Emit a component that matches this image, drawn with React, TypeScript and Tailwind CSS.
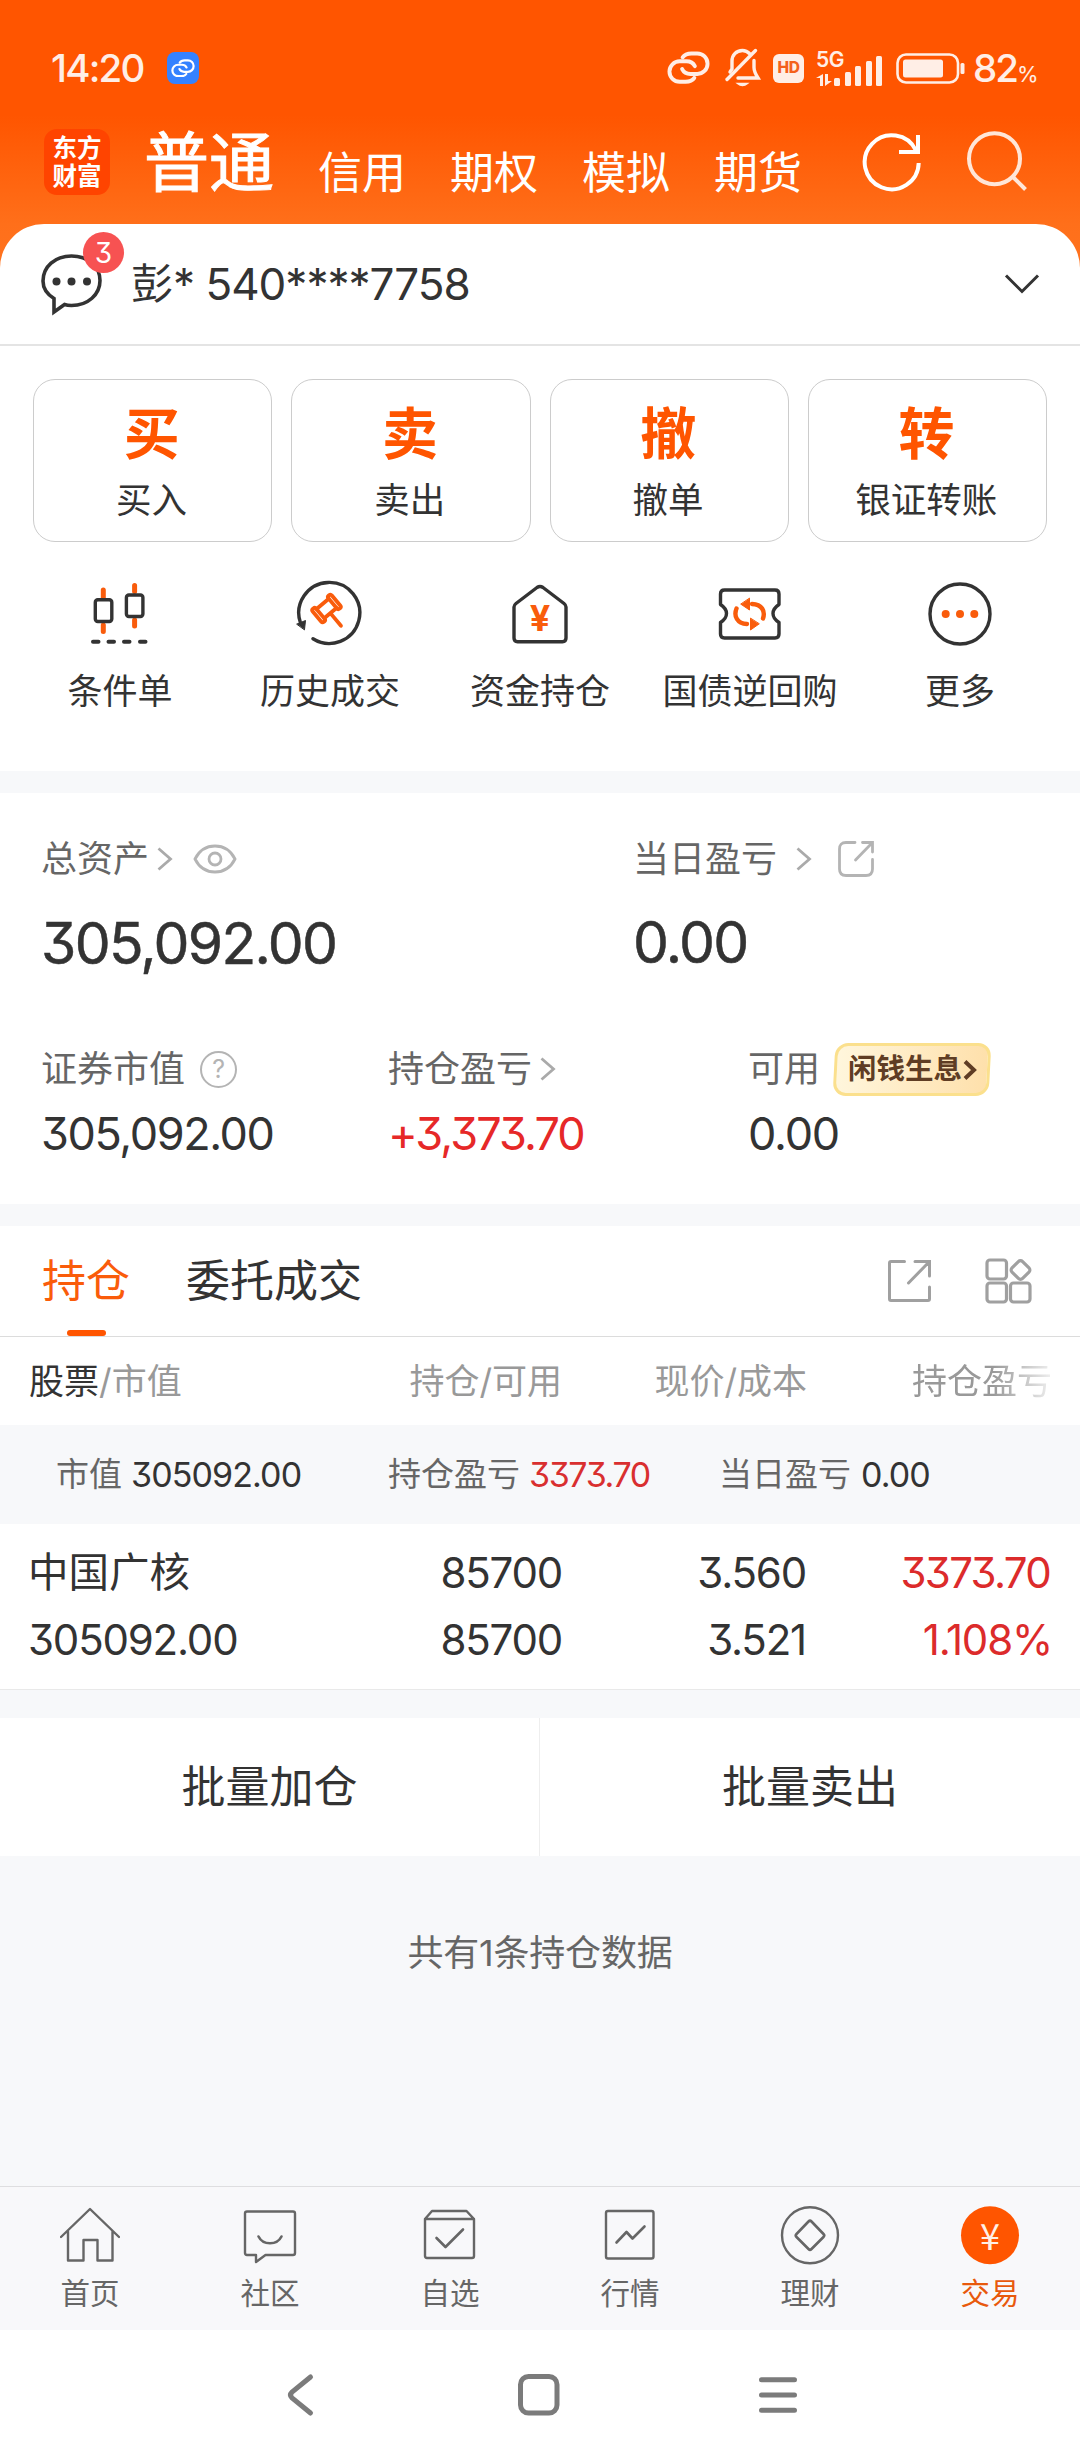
import type { ReactNode } from "react";

const QUICK_ACTIONS = [
  { mark: "买", label: "买入" },
  { mark: "卖", label: "卖出" },
  { mark: "撤", label: "撤单" },
  { mark: "转", label: "银证转账" },
];

const ACCOUNT_TABS = ["信用", "期权", "模拟", "期货"];

const SIGNAL_BARS = [8, 14, 20, 25, 30];

function LinkIcon({ className }: { className?: string }) {
  return (
    <svg viewBox="0 0 44 34" className={className} fill="none" stroke="currentColor" strokeWidth="4" strokeLinecap="round">
      <path d="M16 6.500C18 3.500 21 2.500 25 2.500h6a10.500 10.500 0 0 1 0 21h-7c-4 0-7-2-8.500-5" />
      <path d="M28 27.500c-2 3-5 4-9 4h-6a10.500 10.500 0 0 1 0-21h7c4 0 7 2 8.500 5" />
    </svg>
  );
}

function ChevronRight() {
  return (
    <svg width="16" height="24" viewBox="0 0 16 24" fill="none" stroke="#aaaaaa" strokeWidth="2.800">
      <path d="M1.500 1.500 13.500 12 1.500 22.500" />
    </svg>
  );
}

function StatusBar() {
  return (
    <div className="flex h-[112px] items-center pt-[24px] pl-[51px] text-[#ffeee6]">
      <span className="w-[116px] text-[38.500px] leading-[44px] font-medium tracking-[-1.800px]">14:20</span>
      <span className="flex size-8 items-center justify-center rounded-[8px] bg-[#3482ff] text-white">
        <LinkIcon className="w-[24px]" />
      </span>
      <LinkIcon className="ml-[468px] w-[43px]" />
      <svg className="ml-[14px]" width="38" height="40" viewBox="0 0 38 40" fill="none" stroke="currentColor" strokeWidth="3.400" strokeLinecap="round">
        <path d="M26 6C23.500 3.500 21 2.500 18.500 2.500 12 2.500 8 7.500 8 13v8l-2 3" />
        <path d="M30 12.500v7c0 4 1.500 6.500 4 10.500H14" />
        <path d="M31.500 2.500 3 31.500" />
        <path d="M13.500 35.500c3 2.500 7 2.500 10 0z" fill="currentColor" strokeWidth="1.500" />
      </svg>
      <span className="ml-[11px] flex h-[29px] w-[31px] items-center justify-center rounded-[6px] bg-[#ffeee6] text-[15.500px] font-extrabold tracking-[-0.500px] text-[#f4601c]">
        HD
      </span>
      <div className="ml-[12px] flex h-[35px] w-[68px] items-end">
        <div className="flex h-full w-[18px] flex-col justify-between">
          <span className="text-[21px] leading-[18px] font-semibold tracking-[-0.500px]">5G</span>
          <svg width="16" height="12" viewBox="0 0 16 12" fill="currentColor">
            <path d="M4 12V4H0L7 0v12zM9 0v12l7-5h-4V0z" />
          </svg>
        </div>
        <div className="flex items-end gap-[4.500px]">
          {SIGNAL_BARS.map((height) => (
            <span key={height} className="w-[6px] rounded-[1.500px] bg-[#ffeee6]" style={{ height }} />
          ))}
        </div>
      </div>
      <svg className="ml-[12px]" width="70" height="31" viewBox="0 0 70 31">
        <rect x="1.500" y="1.500" width="60.500" height="28" rx="8.500" fill="none" stroke="currentColor" strokeWidth="2.600" />
        <rect x="7" y="6.500" width="40" height="18" rx="2.500" fill="currentColor" />
        <rect x="64.500" y="10" width="4" height="11" rx="1.500" fill="currentColor" />
      </svg>
      <span className="ml-[7px] text-[38.500px] leading-[44px] font-medium tracking-[-2px]">82</span>
      <span className="mt-[12px] text-[22px] leading-none">%</span>
    </div>
  );
}

function Header() {
  return (
    <div className="flex h-[100px] items-center pl-[44px] text-white">
      <div className="flex h-[66px] w-[66px] flex-col items-center justify-center rounded-[13px] bg-[#ff4400] text-[24.500px] leading-[28px] font-bold">
        <span>东方</span>
        <span>财富</span>
      </div>
      <div className="ml-[34px] flex items-end leading-none">
        <span className="text-[65px] [-webkit-text-stroke:1px_#fff]">普通</span>
        {ACCOUNT_TABS.map((tab) => (
          <span key={tab} className="ml-[44px] text-[44px]">
            {tab}
          </span>
        ))}
      </div>
      <svg className="ml-[58px]" width="64" height="64" viewBox="0 0 64 64" fill="none" stroke="currentColor" strokeWidth="4">
        <path d="M58.700 33A27 27 0 1 1 56 20.500" />
        <path d="M58 5v17H39" />
      </svg>
      <svg className="ml-[38px]" width="68" height="64" viewBox="0 0 68 64" fill="none" stroke="#ffe6d8" strokeWidth="4">
        <circle cx="32.500" cy="28.700" r="25.500" />
        <path d="M50 46 63.500 59.500" />
      </svg>
    </div>
  );
}

function AccountRow() {
  return (
    <div className="flex h-[122px] items-center border-b-2 border-[#e4e4e4] pr-[40px] pl-[40px] text-[#333333]">
      <div className="relative">
        <svg width="64" height="64" viewBox="0 0 64 64" fill="none" stroke="#333333" strokeWidth="3.600">
          <path d="M14 46.500C6 41.500 3 35 3 29 3 14.500 15 4 31.500 4S60 14.500 60 28.500 48 53.500 31.500 53.500c-2.500 0-5-.3-7-1L14 60z" />
          <g fill="#333333" stroke="none">
            <circle cx="16.500" cy="29.500" r="4" />
            <circle cx="31.500" cy="29.500" r="4" />
            <circle cx="47" cy="29.500" r="4" />
          </g>
        </svg>
        <span className="absolute -top-[20px] left-[43px] flex size-[41px] items-center justify-center rounded-full bg-[#f75252] text-[28px] text-white">
          3
        </span>
      </div>
      <div className="ml-[27px] flex flex-1 items-center leading-none">
        <span className="text-[42px]">彭</span>
        <span className="text-[44px] tracking-[-1px]">* 540****7758</span>
      </div>
      <svg width="36" height="20" viewBox="0 0 36 20" fill="none" stroke="#333333" strokeWidth="3">
        <path d="M2 1.500 18 17.500 34 1.500" />
      </svg>
    </div>
  );
}

function QuickActions() {
  return (
    <div className="grid grid-cols-4 gap-x-[19px] px-[33px] pt-[33px]">
      {QUICK_ACTIONS.map((action) => (
        <div key={action.label} className="flex h-[163px] flex-col items-center rounded-[22px] border border-[#cccccc] pt-[24px] pr-[2px]">
          <span className="text-[56px] leading-[60px] font-bold text-[#ff5500]">{action.mark}</span>
          <span className="mt-[17px] text-[35.500px] leading-[40px] text-[#333333]">{action.label}</span>
        </div>
      ))}
    </div>
  );
}

function Shortcut({ label, children }: { label: string; children: ReactNode }) {
  return (
    <div className="flex flex-col items-center">
      <svg width="70" height="70" viewBox="0 0 70 70" fill="none" stroke="#333333" strokeWidth="3.400" strokeLinecap="round" strokeLinejoin="round">
        {children}
      </svg>
      <span className="mt-[23px] text-[35px] leading-[40px] whitespace-nowrap text-[#333333]">{label}</span>
    </div>
  );
}

function Shortcuts() {
  return (
    <div className="grid h-[229px] grid-cols-5 px-[15px] pt-[36px]">
      <Shortcut label="条件单">
        <path stroke="#f95c0c" strokeWidth="5" d="M18.300 12v8M18.300 47v6.500M49.600 7.500v6M49.600 42v6" />
        <rect x="10.300" y="21.700" width="16.500" height="21.800" rx="2.500" />
        <rect x="41.400" y="17" width="16.500" height="21.500" rx="2.500" />
        <path strokeWidth="4" d="M8 63.700h5.500M23.500 63.700H29M39 63.700h5.500M55 63.700h5.500" />
      </Shortcut>
      <Shortcut label="历史成交">
        <path d="M18 60.700A30.500 30.500 0 1 0 5.500 45" />
        <path fill="#333333" strokeWidth="1" d="M2 46 10.500 42.500 9.500 51.500z" />
        <g transform="translate(31.500 30.500) rotate(-40)" stroke="#f95c0c" strokeWidth="3.800">
          <rect x="-12.500" y="-8.500" width="4.500" height="17" rx="2" />
          <rect x="8" y="-8.500" width="4.500" height="17" rx="2" />
          <path d="M-8-6H8M-8 6H8M0 7v15.500" />
        </g>
      </Shortcut>
      <Shortcut label="资金持仓">
        <path d="M9 60V29q0-2 2-3.500L32 9.500q3-2 6 0l21 16q2 1.500 2 3.500v31q0 3.700-3.500 3.700h-45Q9 63.700 9 60z" />
        <text x="35" y="52.500" textAnchor="middle" fill="#f95c0c" stroke="none" fontSize="36" fontWeight="700">
          ¥
        </text>
      </Shortcut>
      <Shortcut label="国债逆回购">
        <path d="M9.500 12h50.500q4 0 4 4v10.500q-6 4-6 9t6 9V56q0 4-4 4H9.500q-4 0-4-4V44.500q6-4 6-9t-6-9V16q0-4 4-4z" />
        <g stroke="#f95c0c" strokeWidth="4.400">
          <path d="M21.500 30.500C18.500 38 22 45.500 32 46M48 40.500C50.500 33 47 26.500 37 26" />
          <path fill="#f95c0c" strokeWidth="1" d="M35.500 40.500v11.500l8.500-6zM34.500 20.500V32L26 26.300z" />
        </g>
      </Shortcut>
      <Shortcut label="更多">
        <circle cx="35" cy="36" r="30" />
        <g fill="#f95c0c" stroke="none">
          <circle cx="20.700" cy="36" r="4" />
          <circle cx="35" cy="36" r="4" />
          <circle cx="49.300" cy="36" r="4" />
        </g>
      </Shortcut>
    </div>
  );
}

function Assets() {
  return (
    <section className="h-[411px] bg-white pt-[44px] pl-[41px] text-[36px] text-[#666666]">
      <div className="flex">
        <div className="w-[592px]">
          <div className="flex h-[44px] items-center">
            <span>总资产</span>
            <span className="ml-[8px]">
              <ChevronRight />
            </span>
            <svg className="ml-[20px]" width="44" height="30" viewBox="0 0 44 30" fill="none" stroke="#b4b4b4" strokeWidth="2.800">
              <path d="M2 15C6 7 13 2 22 2s16 5 20 13c-4 8-11 13-20 13S6 23 2 15z" />
              <circle cx="22" cy="15" r="6" />
            </svg>
          </div>
          <div className="mt-[33px] text-[57px] leading-[60px] tracking-[-1.700px] text-[#333333] [-webkit-text-stroke:0.500px_#333]">
            305,092.00
          </div>
        </div>
        <div>
          <div className="flex h-[44px] items-center">
            <span>当日盈亏</span>
            <span className="ml-[19px]">
              <ChevronRight />
            </span>
            <svg className="ml-[25px]" width="38" height="38" viewBox="0 0 38 38" fill="none" stroke="#b4b4b4" strokeWidth="2.800" strokeLinecap="round">
              <path d="M18 2.500H9Q2.500 2.500 2.500 9v20q0 6.500 6.500 6.500h20q6.500 0 6.500-6.500V19.500" />
              <path d="M25.500 2.500h10V12M34.500 3.500 18.500 20" />
            </svg>
          </div>
          <div className="mt-[32px] text-[57px] leading-[60px] tracking-[-1.700px] text-[#333333] [-webkit-text-stroke:0.500px_#333]">
            0.00
          </div>
        </div>
      </div>

      <div className="mt-[69px] flex">
        <div className="w-[347px]">
          <div className="flex h-[52px] items-center">
            <span>证券市值</span>
            <span className="ml-[15px] flex size-[37px] items-center justify-center rounded-full border-[2.500px] border-[#b4b4b4] text-[25px] leading-none text-[#b4b4b4]">
              ?
            </span>
          </div>
          <div className="mt-[17px] text-[45px] leading-[44px] tracking-[-1.400px] text-[#333333]">305,092.00</div>
        </div>
        <div className="w-[360px]">
          <div className="flex h-[52px] items-center">
            <span>持仓盈亏</span>
            <span className="ml-[8px]">
              <ChevronRight />
            </span>
          </div>
          <div className="mt-[17px] text-[45px] leading-[44px] tracking-[-1.900px] text-[#e62828]">+3,373.70</div>
        </div>
        <div>
          <div className="flex h-[52px] items-center">
            <span>可用</span>
            <div className="ml-[14px] h-[53px] w-[156px] -skew-x-3 rounded-[13px] border-[3px] border-[#fbe08d] bg-linear-to-r from-[#fff6dc] to-[#fee0ab]">
              <div className="flex h-full skew-x-3 items-center pl-[11px] text-[28.500px] font-bold text-[#5f3d24]">
                <span>闲钱生息</span>
                <svg className="ml-[1px]" width="14" height="20" viewBox="0 0 14 20" fill="none" stroke="#5f3d24" strokeWidth="4">
                  <path d="M2 1.500 11 10 2 18.500" />
                </svg>
              </div>
            </div>
          </div>
          <div className="mt-[17px] text-[45px] leading-[44px] tracking-[-1.200px] text-[#333333]">0.00</div>
        </div>
      </div>
    </section>
  );
}

function PositionTabs() {
  return (
    <div className="flex h-[111px] items-center border-b border-[#dcdcdc] pr-[47px] pl-[42px] text-[44px]">
      <div className="relative flex h-full items-center text-[#fa5c0a]">
        持仓
        <span className="absolute bottom-0 left-[25px] h-[6px] w-[39px] rounded-[3px] bg-[#ff5500]" />
      </div>
      <span className="ml-[56px] flex-1 text-[#333333]">委托成交</span>
      <svg width="46" height="46" viewBox="0 0 46 46" fill="none" stroke="#a0a0a0" strokeWidth="3" strokeLinecap="round">
        <path d="M18.500 3.500H5q-1.500 0-1.500 1.500v36q0 1.500 1.500 1.500h37q1.500 0 1.500-1.500V29" />
        <path d="M29 3.500h14.500V18M42.500 4.500 22.500 25" />
      </svg>
      <svg className="ml-[53px]" width="48" height="46" viewBox="0 0 48 46" fill="none" stroke="#a0a0a0" strokeWidth="3.200">
        <rect x="2" y="2" width="19.500" height="19" rx="3" />
        <rect x="2" y="25" width="19.500" height="19" rx="3" />
        <rect x="25.500" y="25" width="19.500" height="19" rx="3" />
        <rect x="28" y="4.500" width="15" height="15" rx="3" transform="rotate(45 35.500 12)" />
      </svg>
    </div>
  );
}

function Positions() {
  return (
    <section className="bg-white">
      <PositionTabs />
      <div className="flex h-[88px] items-center pl-[29px] text-[35px] text-[#999999]">
        <span className="w-[232px]">
          <span className="text-[#333333]">股票</span>/市值
        </span>
        <span className="w-[301px] text-right">持仓/可用</span>
        <span className="w-[245px] text-right">现价/成本</span>
        <span className="ml-[105px] [mask-image:linear-gradient(to_right,#000_58%,rgba(0,0,0,0.15))]">持仓盈亏</span>
      </div>
      <div className="flex h-[99px] items-center bg-[#f7f8fa] pl-[56px] text-[33px] text-[#666666]">
        <div className="flex w-[332px] items-center gap-[9px]">
          <span>市值</span>
          <span className="text-[34px] tracking-[-0.900px] text-[#333333]">305092.00</span>
        </div>
        <div className="flex w-[331px] items-center gap-[9px]">
          <span>持仓盈亏</span>
          <span className="text-[34px] tracking-[-1.400px] text-[#d92f2f]">3373.70</span>
        </div>
        <div className="flex items-center gap-[10px]">
          <span>当日盈亏</span>
          <span className="text-[34px] tracking-[-0.900px] text-[#333333]">0.00</span>
        </div>
      </div>
      <div className="flex h-[166px] border-b border-[#e9e9e9] pt-[15px] text-[42px] leading-[67px] tracking-[-1.200px] text-[#333333]">
        <div className="w-[262px] pl-[28px]">
          <div className="text-[40.500px] tracking-normal">中国广核</div>
          <div>305092.00</div>
        </div>
        <div className="w-[300px] text-right">
          <div>85700</div>
          <div>85700</div>
        </div>
        <div className="w-[244px] text-right">
          <div>3.560</div>
          <div>3.521</div>
        </div>
        <div className="w-[244px] text-right text-[#dc2b2b]">
          <div className="tracking-[-1.700px]">3373.70</div>
          <div className="-mr-[2px]">1.108%</div>
        </div>
      </div>
    </section>
  );
}

function NavItem({ label, active, children }: { label: string; active?: boolean; children: ReactNode }) {
  return (
    <div className={active ? "flex flex-col items-center text-[#e8590c]" : "flex flex-col items-center text-[#666666]"}>
      <svg width="60" height="60" viewBox="0 0 60 60" fill="none" stroke="currentColor" strokeWidth="2.400" strokeLinecap="round" strokeLinejoin="round">
        {children}
      </svg>
      <span className="mt-[10px] text-[29.500px] leading-[36px]">{label}</span>
    </div>
  );
}

function BottomNav() {
  return (
    <nav className="grid h-[144px] grid-cols-6 border-t border-[#dedee0] bg-[#f8f8fa] pt-[18px]">
      <NavItem label="首页">
        <path d="M1 32 30 4l29 28M8 26.500V55.500h15.500V35h14v20.500H52.500V26.500" />
      </NavItem>
      <NavItem label="社区">
        <path d="M7 6.500h46q2 0 2 2V48q0 2-2 2H25.500L16 57V50H7q-2 0-2-2V8.500q0-2 2-2z" />
        <path strokeWidth="2.600" d="M18.500 31.500C23 40.500 37 40.500 41.500 31.500" />
      </NavItem>
      <NavItem label="自选">
        <path d="M5 14 12 6H46.500L54 14V51q0 2-2 2H7q-2 0-2-2zM5 14H54" />
        <path strokeWidth="2.600" d="M16.500 33 25.500 42 43 24.500" />
      </NavItem>
      <NavItem label="行情">
        <rect x="6" y="6" width="47.500" height="47.500" rx="2" />
        <path strokeWidth="2.600" d="M16.500 37.500 26.500 27l6 6.500 12-12" />
      </NavItem>
      <NavItem label="理财">
        <circle cx="30" cy="30.300" r="28" />
        <path strokeWidth="2.600" d="M28.500 16.500q1.500-1.500 3 0L43.500 29q1.500 1.500 0 3L31.500 44q-1.500 1.500-3 0L16.500 32q-1.500-1.500 0-3z" />
      </NavItem>
      <NavItem label="交易" active>
        <circle cx="30" cy="30.300" r="29" fill="#ff5500" stroke="none" />
        <text x="30" y="44.500" textAnchor="middle" fill="#fff0e6" stroke="none" fontSize="36" fontFamily="Noto Sans CJK SC">
          ¥
        </text>
      </NavItem>
    </nav>
  );
}

function SystemBar() {
  return (
    <div className="flex h-[130px] items-center bg-white pl-[285px] text-[#7b7b7b]">
      <svg width="32" height="46" viewBox="0 0 32 46" fill="none" stroke="currentColor" strokeWidth="5" strokeLinecap="round">
        <path d="M25.500 5 7 20q-3 3 0 6l18.500 15" />
      </svg>
      <svg className="ml-[199px]" width="46" height="46" viewBox="0 0 46 46" fill="none" stroke="currentColor" strokeWidth="5">
        <rect x="4.500" y="4.500" width="36.500" height="36.500" rx="8" />
      </svg>
      <svg className="ml-[195px]" width="42" height="46" viewBox="0 0 42 46" stroke="currentColor" strokeWidth="5" strokeLinecap="round">
        <path d="M4.500 7.700h33M4.500 23h33M4.500 38.300h33" />
      </svg>
    </div>
  );
}

export default function App() {
  return (
    <div className="flex h-[2460px] w-[1080px] flex-col overflow-hidden bg-[#f7f8fa] font-['Inter','Noto_Sans_CJK_SC',sans-serif] [font-feature-settings:'cv09']">
      <header className="bg-[linear-gradient(to_bottom,#ff5500_115px,#ff6f1a_224px,#ff7420_280px)]">
        <StatusBar />
        <Header />
        <div className="mt-[12px] rounded-t-[44px] bg-white">
          <AccountRow />
          <QuickActions />
          <Shortcuts />
        </div>
      </header>
      <div className="mt-[22px]">
        <Assets />
      </div>
      <div className="mt-[22px]">
        <Positions />
      </div>
      <div className="mt-[28px] grid h-[138px] grid-cols-2 bg-white text-[44px] text-[#333333]">
        <div className="flex items-center justify-center border-r border-[#eeeeee]">批量加仓</div>
        <div className="flex items-center justify-center">批量卖出</div>
      </div>
      <p className="mt-[75px] flex-1 text-center text-[36px] leading-[44px] tracking-[-0.200px] text-[#666666]">共有1条持仓数据</p>
      <BottomNav />
      <SystemBar />
    </div>
  );
}
